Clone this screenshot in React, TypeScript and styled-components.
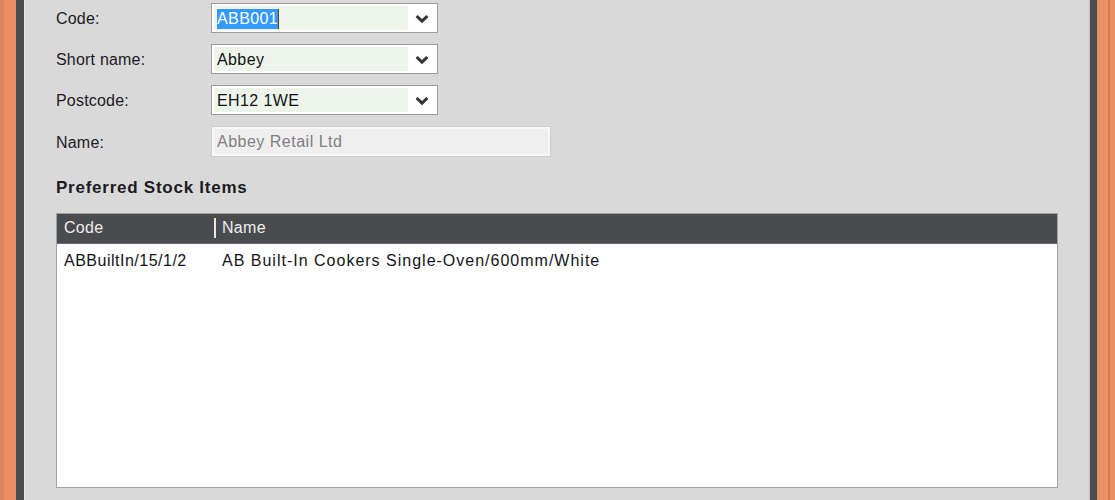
import React from "react";
import styled, { createGlobalStyle } from "styled-components";

const Global = createGlobalStyle`
  html, body { margin: 0; padding: 0; }
  body { font-family: "Liberation Sans", Arial, sans-serif; }
`;

const Frame = styled.div`
  display: flex;
  height: 500px;
  width: 1115px;
  box-sizing: border-box;
  background: #eb9065;
  border-left: 4px solid #d9845c;
  padding-left: 12px;
  padding-right: 18px;
  box-shadow: inset -5px 0 0 #eb9065, inset -7px 0 0 #cf7c55;
  overflow: hidden;
`;

const Window = styled.div`
  flex: 1;
  display: flex;
  flex-direction: column;
  background: #d9d9d9;
  border-left: 8px solid #4a4c4f;
  border-right: 7px solid #4a4c4f;
  box-shadow: inset 1px 0 0 #e4e4e4, inset -1px 0 0 #c4c4c4;
  padding: 3px 0 0 32px;
`;

const Form = styled.div`
  display: flex;
  flex-direction: column;
  gap: 11px;
`;

const Row = styled.div<{ $h?: number }>`
  display: grid;
  grid-template-columns: 155px auto;
  align-items: center;
  height: ${(p) => p.$h ?? 30}px;
`;

const Label = styled.span`
  font-size: 16px;
  color: #1c1c22;
  letter-spacing: 0.2px;
  padding-top: 2px;
`;

const Select = styled.div`
  display: flex;
  width: 227px;
  height: 30px;
  box-sizing: border-box;
  border: 1px solid #9c9c9c;
  background: #fff;
  padding: 2px;
`;

const SelectText = styled.div`
  flex: 1;
  background: #edf5eb;
  display: flex;
  align-items: center;
  padding: 2px 0 0 3px;
  font-size: 16px;
  color: #111;
  letter-spacing: 0.4px;
`;

const Arrow = styled.div`
  width: 27px;
  display: flex;
  align-items: center;
  justify-content: center;
  padding-top: 1px;
`;

const Selected = styled.span`
  background: #3399ff;
  color: #fff;
  padding: 2px 0 2px 0;
  line-height: 16px;
`;

const Caret = styled.span`
  display: inline-block;
  width: 1px;
  height: 20px;
  background: #6a3a1a;
`;

const ReadOnly = styled.div`
  width: 340px;
  height: 31px;
  box-sizing: border-box;
  border: 1px solid #cdcdcd;
  box-shadow: inset 0 0 0 2px #f7f7f7;
  background: #efefef;
  display: flex;
  align-items: center;
  padding: 1px 0 0 5px;
  font-size: 16px;
  color: #808080;
  letter-spacing: 0.5px;
`;

const Section = styled.div`
  font-size: 17px;
  font-weight: bold;
  color: #1c1c22;
  letter-spacing: 0.75px;
  margin-top: 21px;
  height: 20px;
  line-height: 20px;
`;

const Table = styled.div`
  margin-top: 15px;
  width: 1002px;
  height: 275px;
  box-sizing: border-box;
  border: 1px solid #a2a2a2;
  background: #fff;
  display: flex;
  flex-direction: column;
`;

const Header = styled.div`
  display: grid;
  grid-template-columns: 157px 1fr;
  height: 30px;
  background: #4a4b4f;
  border-bottom: 1px solid #6a6b6e;
  box-sizing: border-box;
`;

const HeadCell = styled.div<{ $sep?: boolean }>`
  display: flex;
  align-items: center;
  gap: 6px;
  padding-left: ${(p) => (p.$sep ? 0 : 7)}px;
  padding-bottom: 1px;
  font-size: 16px;
  color: #eeeeee;
  letter-spacing: 0.3px;
`;

const Sep = styled.span`
  width: 2px;
  height: 20px;
  background: #e6e6e6;
`;

const DataRow = styled.div`
  display: grid;
  grid-template-columns: 158px 1fr;
  height: 33px;
  align-items: center;
`;

const Cell = styled.div<{ $ls: number }>`
  padding-left: 7px;
  font-size: 16px;
  color: #14141a;
  letter-spacing: ${(p) => p.$ls}px;
  white-space: nowrap;
`;

const Chevron = () => (
  <svg width="14" height="10" viewBox="0 0 14 10">
    <polyline points="1.6,2 7,7.2 12.4,2" fill="none" stroke="#333" strokeWidth="3" />
  </svg>
);

export default function App() {
  return (
    <>
      <Global />
      <Frame>
        <Window>
          <Form>
            <Row>
              <Label>Code:</Label>
              <Select>
                <SelectText>
                  <Selected>ABB001</Selected>
                  <Caret />
                </SelectText>
                <Arrow><Chevron /></Arrow>
              </Select>
            </Row>
            <Row>
              <Label>Short name:</Label>
              <Select>
                <SelectText>Abbey</SelectText>
                <Arrow><Chevron /></Arrow>
              </Select>
            </Row>
            <Row>
              <Label>Postcode:</Label>
              <Select>
                <SelectText>EH12 1WE</SelectText>
                <Arrow><Chevron /></Arrow>
              </Select>
            </Row>
            <Row $h={31}>
              <Label>Name:</Label>
              <ReadOnly>Abbey Retail Ltd</ReadOnly>
            </Row>
          </Form>
          <Section>Preferred Stock Items</Section>
          <Table>
            <Header>
              <HeadCell>Code</HeadCell>
              <HeadCell $sep>
                <Sep />
                Name
              </HeadCell>
            </Header>
            <DataRow>
              <Cell $ls={0.5}>ABBuiltIn/15/1/2</Cell>
              <Cell $ls={1}>AB Built-In Cookers Single-Oven/600mm/White</Cell>
            </DataRow>
          </Table>
        </Window>
      </Frame>
    </>
  );
}
